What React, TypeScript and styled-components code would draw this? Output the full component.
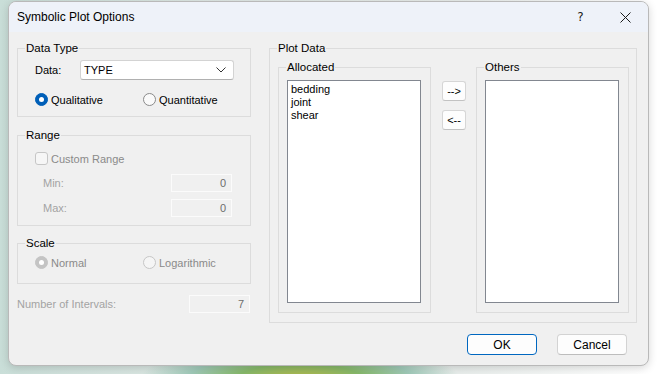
import React from 'react'
import styled, {createGlobalStyle} from 'styled-components'

const GlobalStyle = createGlobalStyle`
    html, body {
        margin: 0;
        padding: 0;
    }
    body {
        width: 657px;
        height: 374px;
        overflow: hidden;
        font-family: "Liberation Sans", Arial, sans-serif;
        background:
            radial-gradient(ellipse 160px 40px at 300px 380px, #b9b845 0, #86b86a 40%, #9fc9b8 70%, transparent 100%),
            linear-gradient(90deg, #c9ded8 0, #dfe9e5 30%, #e9eeec 70%, #ffffff 98%);
    }
`

const Page = styled.div`
    padding: 1px 8px 0 8px;
`

const Dialog = styled.div`
    width: 641px;
    height: 365px;
    box-sizing: border-box;
    background: #f0f0f0;
    border: 1px solid #b9b9b9;
    border-radius: 8px;
    overflow: hidden;
    box-shadow: 0 2px 8px rgba(0, 0, 0, 0.16);
    display: flex;
    flex-direction: column;
`

const TitleBar = styled.div`
    height: 30px;
    flex: none;
    display: flex;
    align-items: center;
    background: #eef2f9;
    padding-left: 8px;
    font-size: 12px;
    color: #000;
`

const Title = styled.div`
    flex: 1;
`

const TitleButton = styled.div`
    width: 45px;
    height: 30px;
    display: flex;
    align-items: center;
    justify-content: center;
    font-family: "DejaVu Sans", sans-serif;
    font-size: 12px;
    color: #1a1a1a;
`

const Body = styled.div`
    display: grid;
    grid-template-columns: 234px 368px;
    column-gap: 18px;
    padding: 9px 12px 0 8px;
`

const Column = styled.div`
    display: flex;
    flex-direction: column;
`

const Group = styled.fieldset<{ $mt?: number }>`
    margin: ${p => p.$mt || 0}px 0 0 0;
    padding: 0 7px;
    min-inline-size: 0;
    border: 1px solid #dcdcdc;
    display: flex;
    flex-direction: column;
`

const Legend = styled.legend`
    padding: 0 1px;
    font-size: 11.5px;
    line-height: 14px;
    color: #000;
`

const GroupContent = styled.div<{ $pt: number; $pb: number; $pl: number }>`
    padding: ${p => p.$pt}px 0 ${p => p.$pb}px ${p => p.$pl}px;
    display: flex;
    flex-direction: column;
`

const Row = styled.div<{ $mt?: number }>`
    display: flex;
    align-items: center;
    margin-top: ${p => p.$mt || 0}px;
    font-size: 11px;
`

const Label = styled.span<{ $disabled?: boolean; $indent?: number; $w?: number }>`
    color: ${p => p.$disabled ? '#a3a3a3' : '#000'};
    margin-left: ${p => p.$indent || 0}px;
    width: ${p => p.$w ? p.$w + 'px' : 'auto'};
    flex: none;
`

const Combo = styled.div`
    width: 154px;
    height: 20px;
    box-sizing: border-box;
    background: #fff;
    border: 1px solid #d3d3d3;
    border-bottom-color: #b0b0b0;
    border-radius: 3px;
    display: flex;
    align-items: center;
    justify-content: space-between;
    padding: 0 7px 0 3px;
    font-size: 11px;
`

const Option = styled.label<{ $w?: number; $disabled?: boolean }>`
    display: flex;
    align-items: center;
    gap: 3px;
    width: ${p => p.$w ? p.$w + 'px' : 'auto'};
    color: ${p => p.$disabled ? '#8a8a8a' : '#000'};
    font-size: 11px;
`

const Radio = styled.span<{ $checked?: boolean; $disabled?: boolean }>`
    width: 13px;
    height: 13px;
    box-sizing: border-box;
    border-radius: 50%;
    flex: none;
    position: relative;
    background: ${p => p.$checked ? (p.$disabled ? '#c4c4c4' : '#005fb8') : (p.$disabled ? '#f5f5f5' : '#fafafa')};
    border: 1px solid ${p => p.$checked ? (p.$disabled ? '#c4c4c4' : '#005fb8') : (p.$disabled ? '#c6c6c6' : '#8a8a8a')};
    &::after {
        content: "";
        display: ${p => p.$checked ? 'block' : 'none'};
        position: absolute;
        left: 3px;
        top: 3px;
        width: 5px;
        height: 5px;
        border-radius: 50%;
        background: #fff;
    }
`

const Check = styled.span`
    width: 13px;
    height: 13px;
    box-sizing: border-box;
    border: 1px solid #c6c6c6;
    border-radius: 3px;
    background: #f6f6f6;
    flex: none;
`

const Edit = styled.div<{ $mr?: number }>`
    width: 61px;
    height: 18px;
    box-sizing: border-box;
    margin-left: auto;
    margin-right: ${p => p.$mr || 0}px;
    border: 1px solid #fbfbfb;
    background: #f0f0f0;
    color: #6d6d6d;
    font-size: 11px;
    display: flex;
    align-items: center;
    justify-content: flex-end;
    padding-right: 5px;
`

const IntervalsRow = styled(Row)`
    margin-top: 11px;
    padding-right: 1px;
`

const ListRow = styled.div`
    display: flex;
    align-items: flex-start;
    padding: 5px 1px 9px 1px;
`

const ListGroup = styled(Group)`
    width: 153px;
    box-sizing: border-box;
    flex: none;
`

const ListBox = styled.div`
    width: 134px;
    height: 223px;
    box-sizing: border-box;
    margin: 6px 0 9px 1px;
    background: #fff;
    border: 1px solid #828790;
    padding: 2px 3px;
    font-size: 11px;
    line-height: 13px;
    color: #000;
`

const MoveButtons = styled.div`
    display: flex;
    flex-direction: column;
    gap: 9px;
    padding-top: 21px;
    margin: 0 10px 0 11px;
`

const SmallButton = styled.div`
    width: 24px;
    height: 20px;
    box-sizing: border-box;
    background: #fdfdfd;
    border: 1px solid #d6d6d6;
    border-bottom-color: #c2c2c2;
    border-radius: 3px;
    display: flex;
    align-items: center;
    justify-content: center;
    font-size: 11px;
`

const Footer = styled.div`
    display: flex;
    justify-content: flex-end;
    gap: 20px;
    padding: 11px 21px 0 0;
`

const Button = styled.div<{ $default?: boolean }>`
    width: 70px;
    height: 21px;
    box-sizing: border-box;
    background: #fdfdfd;
    border: 1px solid ${p => p.$default ? '#0067c0' : '#d3d3d3'};
    border-bottom-color: ${p => p.$default ? '#0067c0' : '#bdbdbd'};
    border-radius: 4px;
    display: flex;
    align-items: center;
    justify-content: center;
    font-size: 12px;
    color: #000;
`

const Chevron = () => (
    <svg width="10" height="6" viewBox="0 0 10 6">
        <path d="M0.5 0.5 L5 5 L9.5 0.5" fill="none" stroke="#333" strokeWidth="1"/>
    </svg>
)

const CloseIcon = () => (
    <svg width="11" height="11" viewBox="0 0 11 11">
        <path d="M0.5 0.5 L10.5 10.5 M10.5 0.5 L0.5 10.5" stroke="#1a1a1a" strokeWidth="1"/>
    </svg>
)

export default function App() {
    return (
        <Page>
            <GlobalStyle/>
            <Dialog>
                <TitleBar>
                    <Title>Symbolic Plot Options</Title>
                    <TitleButton>?</TitleButton>
                    <TitleButton><CloseIcon/></TitleButton>
                </TitleBar>
                <Body>
                    <Column>
                        <Group>
                            <Legend>Data Type</Legend>
                            <GroupContent $pt={5} $pb={10} $pl={10}>
                                <Row>
                                    <Label $w={45}>Data:</Label>
                                    <Combo>TYPE<Chevron/></Combo>
                                </Row>
                                <Row $mt={13}>
                                    <Option $w={108}><Radio $checked/>Qualitative</Option>
                                    <Option><Radio/>Quantitative</Option>
                                </Row>
                            </GroupContent>
                        </Group>
                        <Group $mt={11}>
                            <Legend>Range</Legend>
                            <GroupContent $pt={10} $pb={8} $pl={10}>
                                <Row>
                                    <Option $disabled><Check/>Custom Range</Option>
                                </Row>
                                <Row $mt={9}>
                                    <Label $disabled $indent={8}>Min:</Label>
                                    <Edit $mr={11}>0</Edit>
                                </Row>
                                <Row $mt={7}>
                                    <Label $disabled $indent={8}>Max:</Label>
                                    <Edit $mr={11}>0</Edit>
                                </Row>
                            </GroupContent>
                        </Group>
                        <Group $mt={10}>
                            <Legend>Scale</Legend>
                            <GroupContent $pt={6} $pb={14} $pl={10}>
                                <Row>
                                    <Option $w={108} $disabled><Radio $checked $disabled/>Normal</Option>
                                    <Option $disabled><Radio $disabled/>Logarithmic</Option>
                                </Row>
                            </GroupContent>
                        </Group>
                        <IntervalsRow>
                            <Label $disabled>Number of Intervals:</Label>
                            <Edit>7</Edit>
                        </IntervalsRow>
                    </Column>
                    <Column>
                        <Group>
                            <Legend>Plot Data</Legend>
                            <ListRow>
                                <ListGroup>
                                    <Legend>Allocated</Legend>
                                    <ListBox>
                                        <div>bedding</div>
                                        <div>joint</div>
                                        <div>shear</div>
                                    </ListBox>
                                </ListGroup>
                                <MoveButtons>
                                    <SmallButton>--&gt;</SmallButton>
                                    <SmallButton>&lt;--</SmallButton>
                                </MoveButtons>
                                <ListGroup>
                                    <Legend>Others</Legend>
                                    <ListBox/>
                                </ListGroup>
                            </ListRow>
                        </Group>
                    </Column>
                </Body>
                <Footer>
                    <Button $default>OK</Button>
                    <Button>Cancel</Button>
                </Footer>
            </Dialog>
        </Page>
    )
}
